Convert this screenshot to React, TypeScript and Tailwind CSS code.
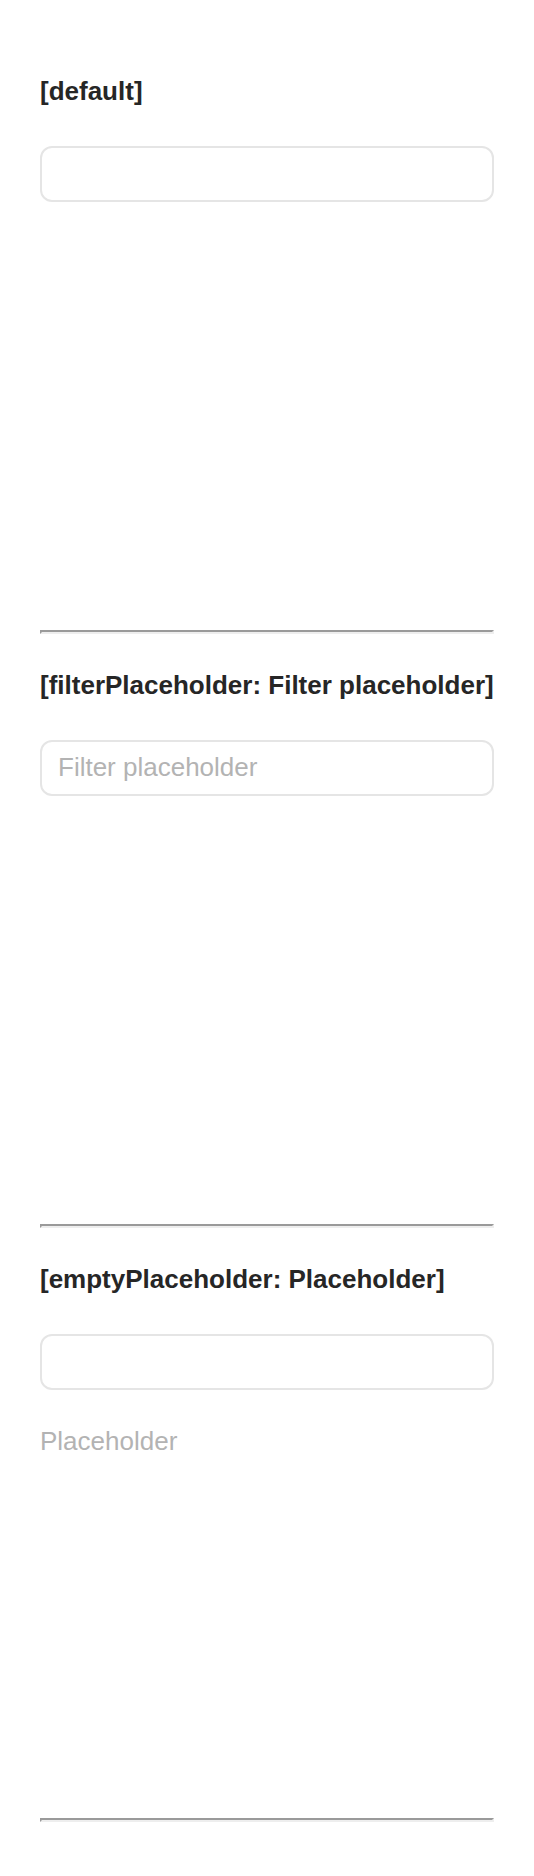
import React from "react";

type SectionProps = {
  title: string;
  filterPlaceholder?: string;
  emptyPlaceholder?: string;
};

function ListSection({ title, filterPlaceholder, emptyPlaceholder }: SectionProps) {
  return (
    <section>
      <h2 className="text-[26px] leading-8 font-bold whitespace-nowrap">{title}</h2>
      <div className="mt-[39px] min-h-[456px]">
        <input
          type="text"
          aria-label={title}
          placeholder={filterPlaceholder}
          className="block h-14 w-full rounded-xl border-2 border-[#e5e5e5] bg-white px-4 pb-0.5 text-[26px] leading-8 outline-none placeholder:text-[#b3b3b3]"
        />
        {emptyPlaceholder && (
          <p className="mt-[35px] text-[26px] leading-8 text-[#b3b3b3]">{emptyPlaceholder}</p>
        )}
      </div>
      <hr className="mt-7 mb-[35px] h-0 border-2 border-t-[#9a9a9a] border-r-[#eeeeee] border-b-[#eeeeee] border-l-[#9a9a9a]" />
    </section>
  );
}

export default function App() {
  return (
    <main className="bg-white px-10 pt-[75px] font-['Liberation_Sans',Arial,sans-serif] text-[#262626]">
      <ListSection title="[default]" />
      <ListSection
        title="[filterPlaceholder: Filter placeholder]"
        filterPlaceholder="Filter placeholder"
      />
      <ListSection title="[emptyPlaceholder: Placeholder]" emptyPlaceholder="Placeholder" />
    </main>
  );
}
